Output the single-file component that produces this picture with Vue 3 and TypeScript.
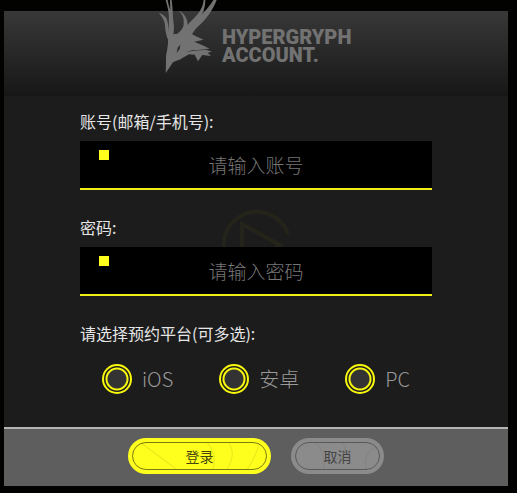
<script setup lang="ts">
import { ref } from 'vue'

interface Platform {
  id: string
  label: string
}

const account = ref('')
const password = ref('')
const chosen = ref<string[]>([])
const platforms: Platform[] = [
  { id: 'ios', label: 'iOS' },
  { id: 'android', label: '安卓' },
  { id: 'pc', label: 'PC' },
]

function reset(): void {
  account.value = ''
  password.value = ''
  chosen.value = []
}
</script>

<template>
  <main class="page">
    <form class="panel" @submit.prevent @reset.prevent="reset">
      <header class="head">
        <svg class="deer" viewBox="0 0 195 234" aria-hidden="true">
          <path d="M11 38 C21 42 29 47 34 54 C39 65 40 80 42 95 L42 125 L36 112 C33 100 30 90 30 75 C28 58 20 49 11 38 Z" />
          <path d="M32 0 L38 0 C40 14 44 22 46 32 L45 0 L50 0 C54 30 53 50 56 70 C58 85 56 95 55 105 L62 145 L38 155 C40 110 43 70 41 40 C39 24 35 12 32 0 Z" />
          <path d="M72 32 C88 39 99 57 98 78 L110 84 L80 115 L52 112 C74 98 87 86 86 70 C88 54 82 43 72 32 Z" />
          <path d="M146 0 L151 0 C151 16 148 30 140 44 C154 30 165 16 175 0 L185 0 C173 30 157 55 130 79 C119 89 113 98 108 110 L80 130 L52 112 C78 102 90 84 102 70 C124 46 142 34 146 0 Z" />
          <path d="M42 110 L58 102 L110 102 L123 109 L146 119 L118 125 L146 137 L164 146 L128 149 L154 149 L171 155 L158 158 L168 168 L142 165 L129 184 L119 164 L102 163 L82 174 C74 181 63 181 54 187 L43 203 L32 219 L33 190 C33 178 32 165 36 152 C40 136 38 123 42 110 Z" />
          <path class="cut" d="M76 134 L74 147 L65 159 L68 143 Z M92 157 L112 151 L146 151 L112 153 Z" />
        </svg>
        <h1 class="brand">HYPERGRYPH<br />ACCOUNT.</h1>
      </header>

      <div class="body">
        <svg class="mark" viewBox="0 0 72 72" aria-hidden="true">
          <path d="M68 25 A33 33 0 1 0 68 47" />
          <path d="M22 60 V15 L60 36 Z" />
        </svg>

        <div class="group">
          <label class="title" for="account">账号(邮箱/手机号):</label>
          <div class="field">
            <input id="account" v-model="account" type="text" placeholder="请输入账号" />
          </div>
        </div>

        <div class="group">
          <label class="title" for="password">密码:</label>
          <div class="field">
            <input id="password" v-model="password" type="password" placeholder="请输入密码" />
          </div>
        </div>

        <fieldset class="group">
          <legend class="title">请选择预约平台(可多选):</legend>
          <div class="options">
            <label v-for="p in platforms" :key="p.id" class="option" :for="p.id">
              <input :id="p.id" v-model="chosen" type="checkbox" :value="p.id" />
              <span>{{ p.label }}</span>
            </label>
          </div>
        </fieldset>
      </div>

      <footer class="foot">
        <button class="btn login" type="submit">
          <svg class="lines" viewBox="0 0 132 26" preserveAspectRatio="none" aria-hidden="true">
            <path d="M8 0 Q30 16 44 27 M74 0 Q84 12 79 27 M95 0 Q103 10 93 27 M125 0 Q123 12 113 27" />
          </svg>
          <span>登录</span>
        </button>
        <button class="btn cancel" type="reset">
          <svg class="lines" viewBox="0 0 84 26" preserveAspectRatio="none" aria-hidden="true">
            <path d="M20 0 Q31 10 28 27 M48 0 Q54 10 39 18 M82 4 Q67 8 71 27" />
          </svg>
          <span>取消</span>
        </button>
      </footer>
    </form>
  </main>
</template>

<style>
body {
  margin: 0;
  background: #020201;
}
</style>

<style scoped>
.page {
  padding: 11px 9px 7px 4px;
  font-family: "Noto Sans CJK SC", "Noto Sans", sans-serif;
}

.panel {
  background: #1c1c1c;
}

.head {
  display: flex;
  box-sizing: border-box;
  height: 85px;
  padding-left: 151px;
  background: linear-gradient(#383838, #171717);
}

.deer {
  flex: none;
  width: 65px;
  height: 78px;
  margin-top: -11px;
  fill: #727272;
}

.cut {
  fill: #2a2a2a;
}

.brand {
  margin: 17px 0 0 2px;
  color: #727272;
  font: 900 20px/18px Roboto, "Liberation Sans", sans-serif;
  white-space: nowrap;
}

.body {
  position: relative;
  display: flex;
  flex-direction: column;
  gap: 25px;
  padding: 13px 76px 33px;
}

.mark {
  position: absolute;
  top: 113px;
  left: 50%;
  width: 72px;
  height: 72px;
  margin-left: -36px;
  fill: none;
  stroke: #25241a;
  stroke-width: 4;
}

.group {
  position: relative;
  min-width: 0;
  margin: 0;
  padding: 0;
  border: 0;
}

.title {
  display: block;
  padding: 0;
  color: #e6e6e6;
  font-size: 16px;
  line-height: 24px;
}

.field {
  position: relative;
  margin-top: 8px;
}

.field::before {
  content: "";
  position: absolute;
  top: 9px;
  left: 19px;
  width: 10px;
  height: 10px;
  background: #ffff1e;
}

.field input {
  display: block;
  box-sizing: border-box;
  width: 100%;
  height: 49px;
  padding: 0 32px;
  border: 0;
  border-bottom: 2px solid #f0ee12;
  border-radius: 0;
  outline: 0;
  background: #000;
  color: #ddd;
  font: 300 19px/30px "Noto Sans CJK SC", sans-serif;
  text-align: center;
}

.field input::placeholder {
  color: #777;
  opacity: 1;
}

.options {
  display: flex;
  justify-content: center;
  gap: 46px;
  margin-top: 19px;
}

.option {
  display: flex;
  align-items: center;
  gap: 10px;
  color: #999;
  font-size: 20px;
  font-weight: 300;
  line-height: 30px;
}

.option input {
  appearance: none;
  box-sizing: border-box;
  width: 30px;
  height: 30px;
  margin: 0;
  border: 2px solid #f8f80c;
  border-radius: 50%;
  background: radial-gradient(circle, #333 9px, #f8f80c 10px, #f8f80c 11px, #1c1c1c 12px);
}

.option input:checked {
  background: radial-gradient(circle, #f8f80c 7px, #1c1c1c 8px, #1c1c1c 9px, #f8f80c 10px, #f8f80c 11px, #1c1c1c 12px);
}

.foot {
  display: flex;
  justify-content: center;
  gap: 20px;
  padding: 9px 0 12px;
  border-top: 2px solid #b4b4b4;
  background: #5e5e5e;
}

.btn {
  position: relative;
  height: 36px;
  padding: 0;
  border: 0;
  border-radius: 18px;
  font: 400 14px/20px "Noto Sans CJK SC", sans-serif;
}

.btn::after {
  content: "";
  position: absolute;
  inset: 4px;
  border: 1px solid currentColor;
  border-radius: 14px;
  opacity: 0.7;
}

.lines {
  position: absolute;
  inset: 5px;
  width: calc(100% - 10px);
  height: 26px;
  fill: none;
  stroke: currentColor;
  stroke-width: 1;
  opacity: 0.12;
}

.login {
  width: 143px;
  background: #ffff1e;
  color: #45450c;
}

.cancel {
  width: 93px;
  background: #8b8b8b;
  color: #444;
}
</style>
